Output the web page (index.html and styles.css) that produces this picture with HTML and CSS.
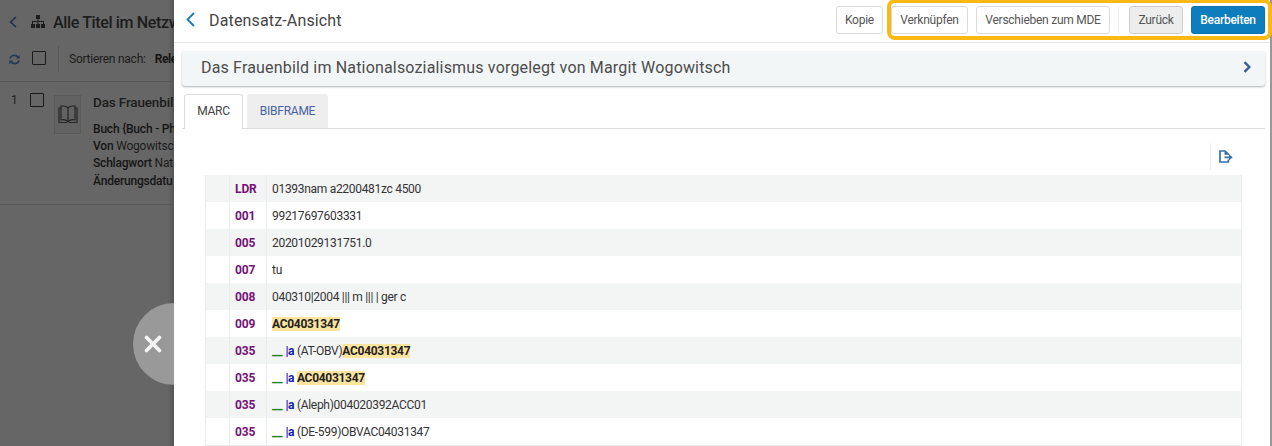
FILE: index.html
```html
<!DOCTYPE html>
<html lang="de">
<head>
  <meta charset="UTF-8" />
  <meta name="viewport" content="width=device-width, initial-scale=1.0" />
  <title>Datensatz-Ansicht</title>
  <link rel="stylesheet" href="styles.css">
</head>
<body>
  <aside class="results">
    <header class="results-header">
      <svg class="back" width="8" height="12" viewBox="0 0 8 12"><path d="M7 1 L1.5 6 L7 11" /></svg>
      <svg class="network" width="14" height="13" viewBox="0 0 14 13">
        <path d="M5 0h4v4H5zM0 9h4v4H0zM5 9h4v4H5zM10 9h4v4h-4zM6.5 4h1v2H13v3h-1V7H7.500v2h-1V7H2v2H1V6h5.500z" />
      </svg>
      <h2>Alle Titel im Netzw</h2>
    </header>
    <div class="results-tools">
      <svg class="refresh" width="11" height="11" viewBox="0 0 11 11">
        <path class="line" d="M1 4.500C1.800 1 7 .3 9 3.300M10 6.500C9.200 10 4 10.700 2 7.700" />
        <path class="tip" d="M10.700 .8v3.700H7zM.3 10.200V6.500H4z" />
      </svg>
      <span class="checkbox"></span>
      <span class="sort">Sortieren nach:</span>
      <b>Rele</b>
    </div>
    <article class="result">
      <span class="number">1</span>
      <span class="checkbox"></span>
      <span class="cover">
        <svg width="20" height="19" viewBox="0 0 20 19">
          <path d="M10 3C8 .7 5.500 .7 3 1.300V15c2.500-.6 5-.4 7 1.800 2-2.200 4.500-2.400 7-1.800V1.300C14.500 .7 12 .7 10 3zV16.800M3 3H1v14.500h8M17 3h2v14.500h-8" />
        </svg>
      </span>
      <div class="details">
        <h3>Das Frauenbil</h3>
        <p><b>Buch {Buch - Ph</b></p>
        <p><b>Von</b> Wogowitsc</p>
        <p><b>Schlagwort</b> Nat</p>
        <p><b>Änderungsdatu</b></p>
      </div>
    </article>
    <div class="close">
      <svg width="18" height="18" viewBox="0 0 18 18"><path d="M2.500 2.500 15.500 15.500M15.500 2.500 2.500 15.500" /></svg>
    </div>
  </aside>

  <main class="panel">
    <header class="panel-header">
      <svg class="back" width="9" height="15" viewBox="0 0 9 15"><path d="M8 1 1.500 7.500 8 14" /></svg>
      <h1>Datensatz-Ansicht</h1>
      <div class="actions">
        <button class="copy">Kopie</button>
        <button class="link">Verknüpfen</button>
        <button class="move">Verschieben zum MDE</button>
        <span class="divider"></span>
        <button class="return">Zurück</button>
        <button class="edit">Bearbeiten</button>
        <div class="highlight"></div>
      </div>
    </header>

    <div class="record-title">
      <span>Das Frauenbild im Nationalsozialismus vorgelegt von Margit Wogowitsch</span>
      <svg width="8" height="12" viewBox="0 0 8 12"><path d="M1.500 1.200 6.300 6 1.500 10.800" /></svg>
    </div>

    <nav class="tabs">
      <a class="active">MARC</a>
      <a class="bibframe">BIBFRAME</a>
    </nav>

    <div class="export">
      <svg width="14" height="13" viewBox="0 0 14 13">
        <path class="line" d="M9.300 9.500V12H1V1h5l3.300 3.300V5M5.500 7.300H11" />
        <path class="tip" d="M5.500 .5v4.300h4.300zM10 4.200 13.700 7.300 10 10.400z" />
      </svg>
    </div>

    <table class="marc">
      <tr><td></td><th>LDR</th><td>01393nam a2200481zc 4500</td></tr>
      <tr><td></td><th>001</th><td>99217697603331</td></tr>
      <tr><td></td><th>005</th><td>20201029131751.0</td></tr>
      <tr><td></td><th>007</th><td>tu</td></tr>
      <tr><td></td><th>008</th><td>040310|2004 ||| m ||| | ger c</td></tr>
      <tr><td></td><th>009</th><td><mark>AC04031347</mark></td></tr>
      <tr><td></td><th>035</th><td><i>__</i> <b>|a</b> (AT-OBV)<mark>AC04031347</mark></td></tr>
      <tr><td></td><th>035</th><td><i>__</i> <b>|a</b> <mark>AC04031347</mark></td></tr>
      <tr><td></td><th>035</th><td><i>__</i> <b>|a</b> (Aleph)004020392ACC01</td></tr>
      <tr><td></td><th>035</th><td><i>__</i> <b>|a</b> (DE-599)OBVAC04031347</td></tr>
    </table>
  </main>
</body>
</html>
```

FILE: styles.css
```css
* {
  box-sizing: border-box;
}

body {
  margin: 0;
  height: 446px;
  display: flex;
  overflow: hidden;
  background: #999;
  font-family: Roboto, sans-serif;
  font-size: 12px;
  color: #333;
}

h1, h2, h3, p {
  margin: 0;
}

svg {
  flex: none;
  fill: none;
}

/* dimmed result list */
.results {
  position: relative;
  width: 174px;
  flex: none;
  overflow: hidden;
  white-space: nowrap;
  background: linear-gradient(90deg, transparent 168px, #555 174px), #666;
  color: #1c1c1c;
}

.results b {
  font-weight: 500;
  color: #151515;
}

.results-header {
  display: flex;
  align-items: center;
  height: 42px;
  padding: 2px 0 0 9px;
}

.results-header .back {
  stroke: #1c2f4c;
  stroke-width: 1.6;
}

.network {
  margin: 0 8px 2px 14px;
  fill: #1c1c1c;
}

.results h2 {
  font-size: 16px;
  font-weight: 500;
  letter-spacing: -.35px;
}

.results-tools {
  display: flex;
  align-items: center;
  height: 40px;
  padding: 0 0 6px 9px;
  border-bottom: 1px solid #575757;
}

.refresh {
  margin-top: 2px;
}

.refresh .line {
  stroke: #203a56;
  stroke-width: 1.6;
}

.refresh .tip {
  fill: #203a56;
}

.checkbox {
  width: 14px;
  height: 14px;
  flex: none;
  border: 1px solid #1b1b1b;
  border-radius: 1px;
}

.results-tools .checkbox {
  margin: 0 0 1px 12px;
}

.sort {
  margin: 0 9px 0 12px;
  padding: 6px 0 6px 10px;
  border-left: 1px solid #595959;
  letter-spacing: -.25px;
}

.results-tools b {
  font-weight: 700;
  letter-spacing: -.4px;
}

.result {
  display: flex;
  align-items: flex-start;
  height: 123px;
  padding: 11px 0 0 11px;
  border-bottom: 1px solid #595959;
}

.number {
  width: 19px;
  flex: none;
}

.cover {
  display: flex;
  align-items: center;
  justify-content: center;
  width: 27px;
  height: 39px;
  margin: 2px 12px 0 10px;
  flex: none;
  border: 1px solid #5a5a5a;
  background: #626262;
}

.cover svg {
  stroke: #262626;
  stroke-width: 1.2;
}

.details h3 {
  margin-bottom: 10px;
  font-size: 13.500px;
  line-height: 18px;
  font-weight: 500;
  letter-spacing: -.15px;
}

.details p {
  line-height: 17.200px;
  letter-spacing: -.2px;
}

.close {
  position: absolute;
  left: 133px;
  top: 303px;
  width: 82px;
  height: 82px;
  padding: 32px 0 0 11px;
  border-radius: 50%;
  background: #999;
}

.close svg {
  stroke: #f4f4f4;
  stroke-width: 3.700;
  stroke-linecap: round;
}

/* record panel */
.panel {
  width: 1096px;
  flex: none;
  background: #fff;
}

.panel-header {
  display: flex;
  align-items: center;
  height: 43px;
  padding: 0 5px 3px 12px;
  border-bottom: 1px solid #e5e5e5;
}

.panel-header .back {
  stroke: #1478b5;
  stroke-width: 1.8;
}

.panel-header h1 {
  padding-top: 1px;
  margin-left: 14px;
  font-size: 16px;
  font-weight: 400;
  letter-spacing: .15px;
  color: #444;
}

.actions {
  position: relative;
  display: flex;
  margin-left: auto;
}

button {
  height: 28px;
  padding: 0;
  border: 1px solid #dadada;
  border-radius: 3px;
  background: #fff;
  font: 12px Roboto, sans-serif;
  letter-spacing: -.25px;
  color: #555;
}

.copy {
  width: 47px;
  margin-right: 8px;
}

.link {
  width: 77px;
  margin-right: 8px;
}

.move {
  width: 134px;
}

.divider {
  margin: 0 10px 0 8px;
  border-left: 1px solid #eee;
}

.return {
  width: 54px;
  margin-right: 8px;
  border-color: #ccc;
  background: #ededed;
}

.edit {
  width: 74px;
  border-color: #0c73ae;
  background: #0e7dbd;
  font-weight: 500;
  color: #fff;
}

.highlight {
  position: absolute;
  left: 51px;
  right: -7px;
  top: -7px;
  height: 41px;
  border: 4px solid #fdb913;
  border-radius: 8px;
}

.record-title {
  display: flex;
  align-items: center;
  justify-content: space-between;
  height: 35px;
  margin: 8px 5px 0 8px;
  padding: 0 14px 3px 19px;
  border-radius: 3px;
  background: #f3f6f7;
  box-shadow: 0 1px 2px #a9b3b3;
  font-size: 16px;
  letter-spacing: .17px;
  color: #4c4c4c;
}

.record-title svg {
  stroke: #3b5c99;
  stroke-width: 2.400;
}

.tabs {
  display: flex;
  height: 35px;
  margin: 8px 5px 0 8px;
  padding-left: 2px;
  border-bottom: 1px solid #ddd;
}

.tabs a {
  height: 35px;
  border-radius: 3px 3px 0 0;
  line-height: 34px;
  text-align: center;
  letter-spacing: -.25px;
}

.tabs .active {
  width: 59px;
  margin-right: 4px;
  border: 1px solid #ddd;
  border-bottom: 0;
  background: #fff;
  line-height: 32px;
  color: #444;
}

.tabs .bibframe {
  width: 81px;
  height: 34px;
  background: #eee;
  color: #4663a3;
}

.export {
  display: flex;
  align-items: center;
  width: 32px;
  height: 27px;
  margin: 14px 28px 5px auto;
  padding-left: 8px;
  border-left: 1px solid #eee;
}

.export .line {
  stroke: #3470aa;
  stroke-width: 1.700;
}

.export .tip {
  fill: #3470aa;
}

.marc {
  width: 1037px;
  margin-left: 31px;
  border-spacing: 0;
  table-layout: fixed;
  border-right: 1px solid #eaeded;
  border-bottom: 1px solid #eaeded;
}

.marc tr {
  height: 27px;
}

.marc tr:nth-child(odd) {
  background: #f3f4f4;
}

.marc td,
.marc th {
  padding: 0 0 0 5px;
  border-left: 1px solid #eaeded;
  text-align: left;
  letter-spacing: -.3px;
}

.marc td:first-child {
  width: 24px;
}

.marc th {
  width: 37px;
  font-weight: 700;
  letter-spacing: -.1px;
  color: #751277;
}

.marc mark {
  background: #fde5a0;
  font-weight: 700;
  color: #222;
}

.marc i {
  font-style: normal;
  font-weight: 700;
  letter-spacing: 0;
  color: #168020;
}

.marc b {
  color: #1a1ab0;
}
```
